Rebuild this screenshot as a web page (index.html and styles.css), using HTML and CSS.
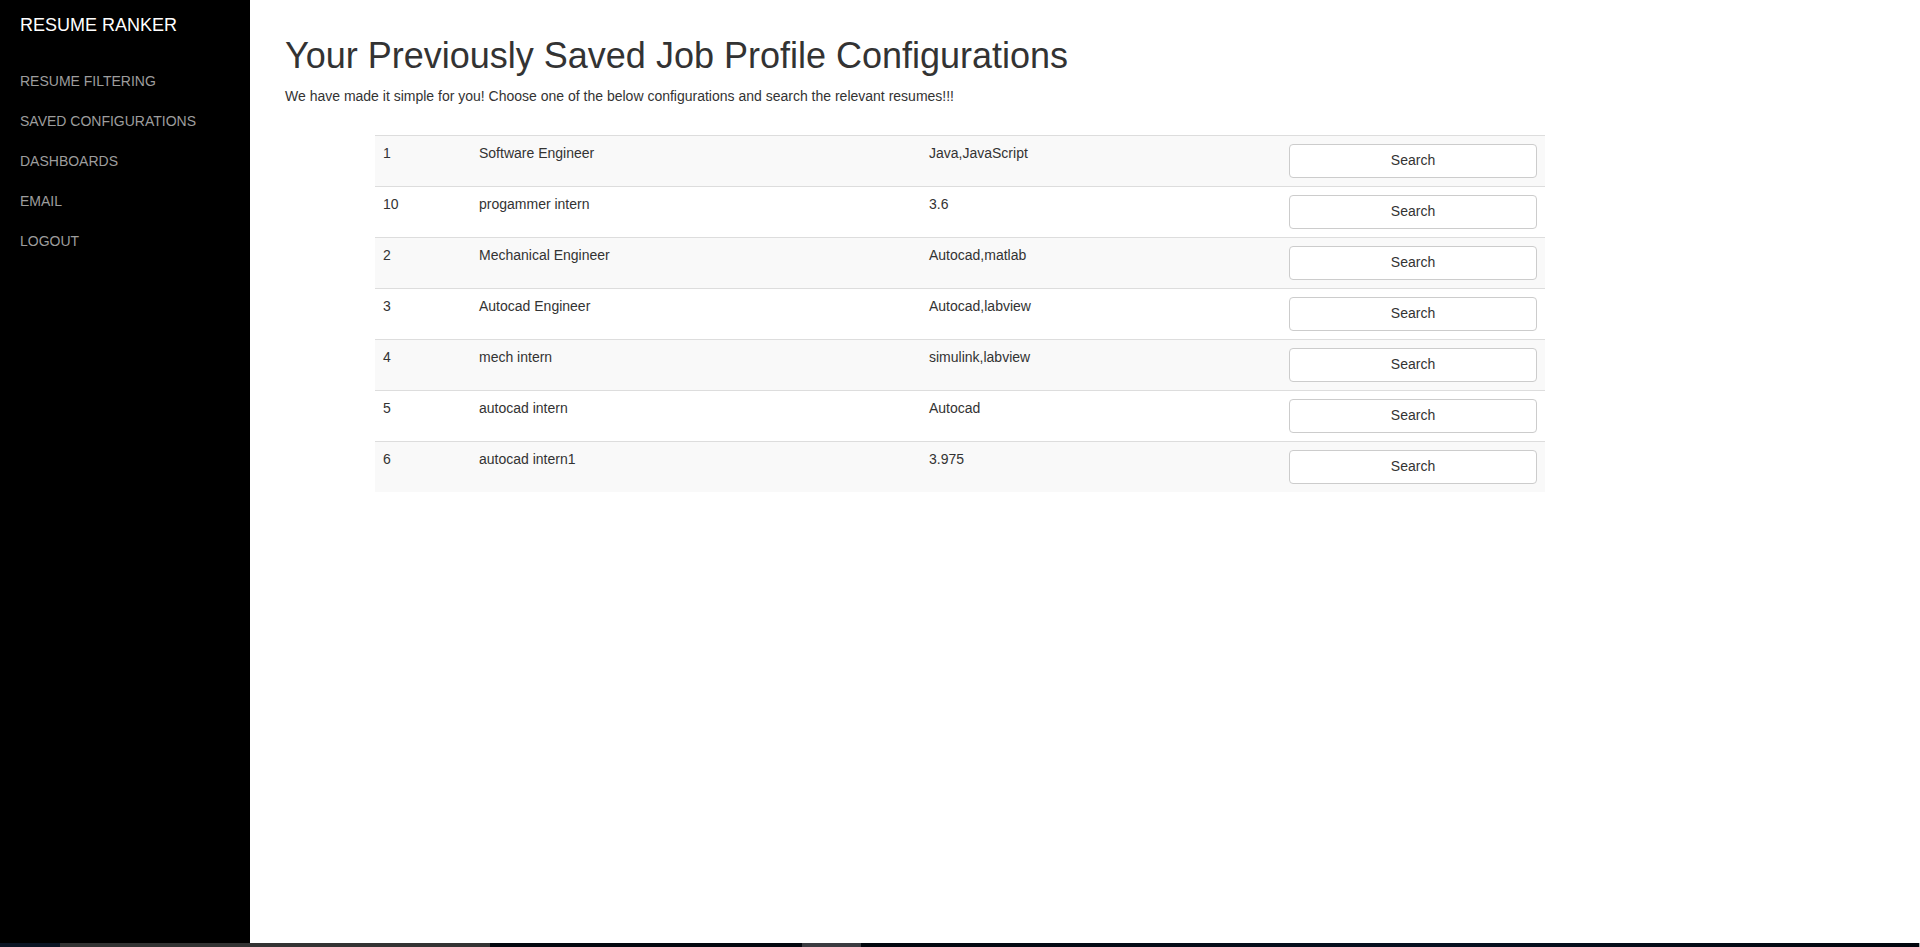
FILE: index.html
```html
<!DOCTYPE html>
<html lang="en">
<head>
<meta charset="utf-8">
<title>Resume Ranker - Saved Configurations</title>
<link rel="stylesheet" href="styles.css">
</head>
<body>
<div class="app">
  <nav class="sidebar">
    <div class="brand">RESUME RANKER</div>
    <ul class="nav">
      <li><a href="#">RESUME FILTERING</a></li>
      <li><a href="#">SAVED CONFIGURATIONS</a></li>
      <li><a href="#">DASHBOARDS</a></li>
      <li><a href="#">EMAIL</a></li>
      <li><a href="#">LOGOUT</a></li>
    </ul>
  </nav>
  <main class="content">
    <h1 class="title">Your Previously Saved Job Profile Configurations</h1>
    <p class="lead">We have made it simple for you! Choose one of the below configurations and search the relevant resumes!!!</p>
    <table class="configs">
      <colgroup>
        <col class="c-id"><col class="c-name"><col class="c-skills"><col class="c-action">
      </colgroup>
      <tbody>
        <tr><td>1</td><td>Software Engineer</td><td>Java,JavaScript</td><td><button class="btn">Search</button></td></tr>
        <tr><td>10</td><td>progammer intern</td><td>3.6</td><td><button class="btn">Search</button></td></tr>
        <tr><td>2</td><td>Mechanical Engineer</td><td>Autocad,matlab</td><td><button class="btn">Search</button></td></tr>
        <tr><td>3</td><td>Autocad Engineer</td><td>Autocad,labview</td><td><button class="btn">Search</button></td></tr>
        <tr><td>4</td><td>mech intern</td><td>simulink,labview</td><td><button class="btn">Search</button></td></tr>
        <tr><td>5</td><td>autocad intern</td><td>Autocad</td><td><button class="btn">Search</button></td></tr>
        <tr><td>6</td><td>autocad intern1</td><td>3.975</td><td><button class="btn">Search</button></td></tr>
      </tbody>
    </table>
  </main>
</div>
<div class="strip">
  <span class="s1"></span><span class="s2"></span><span class="s3"></span><span class="s4"></span><span class="s5"></span><span class="s6"></span>
</div>
</body>
</html>
```
FILE: styles.css
```css
* { box-sizing: border-box; }
html, body { margin: 0; padding: 0; }
body {
  font-family: "Liberation Sans", Arial, sans-serif;
  font-size: 14px;
  line-height: 1.42857;
  color: #333;
  background: #fff;
  height: 947px;
  overflow: hidden;
  display: flex;
  flex-direction: column;
}
.app {
  display: flex;
  height: 943px;
}
.sidebar {
  width: 250px;
  flex: 0 0 250px;
  background: #000;
  padding: 15px 0 0 20px;
}
.brand {
  color: #fff;
  font-size: 18px;
  line-height: 20px;
}
.nav {
  list-style: none;
  margin: 36px 0 0;
  padding: 0;
}
.nav li {
  height: 40px;
  line-height: 20px;
}
.nav a {
  color: #9d9d9d;
  text-decoration: none;
  font-size: 14px;
}
.content {
  flex: 1;
  padding: 11px 35px 0;
}
.title {
  font-size: 36px;
  font-weight: 500;
  line-height: 1.1;
  margin: 25px 0 11px;
  color: #333;
}
.lead {
  margin: 0 0 28px;
}
.configs {
  margin-left: 90px;
  width: 1170px;
  border-collapse: collapse;
  border-spacing: 0;
  table-layout: fixed;
}
.c-id { width: 96px; }
.c-name { width: 450px; }
.c-skills { width: 360px; }
.c-action { width: 264px; }
.configs td {
  padding: 8px;
  vertical-align: top;
  border-top: 1px solid #ddd;
  line-height: 1.42857;
  color: #333;
}
.configs tr:nth-child(odd) td { background: #f9f9f9; }
.btn {
  display: block;
  width: 100%;
  height: 34px;
  padding: 6px 12px;
  font-family: inherit;
  font-size: 14px;
  line-height: 1.42857;
  color: #333;
  background: #fff;
  border: 1px solid #ccc;
  border-radius: 4px;
  cursor: pointer;
}
.strip {
  display: flex;
  height: 4px;
}
.strip span { display: block; height: 4px; }
.s1 { width: 60px; background: #0b1524; }
.s2 { width: 430px; background: #333; }
.s3 { width: 312px; background: #03070e; }
.s4 { width: 59px; background: #3a3b40; }
.s5 { flex: 1; background: linear-gradient(90deg, #02060d, #061020 55%, #02060d); }
.s6 { width: 1px; background: #aaa; }
```
